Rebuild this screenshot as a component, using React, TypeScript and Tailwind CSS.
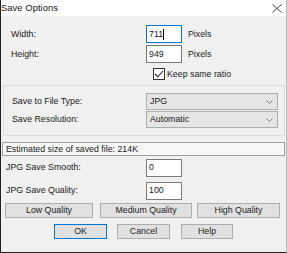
import React from 'react';

const Field: React.FC<{ value: string; focused?: boolean; caret?: boolean; className?: string }> = ({ value, focused, caret, className }) => (
  <div
    className={`flex items-center bg-white border pl-[2px] w-[36px] h-[18px] ${focused ? 'border-[#0078d7]' : 'border-[#7a7a7a]'} ${className ?? ''}`}
  >
    <span>{value}</span>
    {caret && <span className="inline-block w-px h-[11px] bg-black" />}
  </div>
);

const Select: React.FC<{ value: string }> = ({ value }) => (
  <div className="flex items-center justify-between w-[132px] h-[17px] bg-[#e5e5e5] border border-[#acacac] pl-[3px] pr-[4px]">
    <span>{value}</span>
    <svg width="7" height="4" viewBox="0 0 7 4" className="text-[#7a7a7a]">
      <path d="M0.5 0.5 L3.5 3.5 L6.5 0.5" fill="none" stroke="currentColor" strokeWidth="1" />
    </svg>
  </div>
);

const Button: React.FC<{ label: string; width: string; primary?: boolean; className?: string }> = ({ label, width, primary, className }) => (
  <div
    className={`flex items-center justify-center h-[15px] bg-[#e1e1e1] border ${primary ? 'border-[#0078d7]' : 'border-[#adadad]'} ${width} ${className ?? ''}`}
  >
    {label}
  </div>
);

export default function App() {
  return (
    <div className="w-[287px] h-[253px] flex flex-col bg-[#f0f0f0] border-l border-b border-l-[#222] border-b-[#222] border-r border-r-[#bdbdbd] font-['Liberation_Sans',sans-serif] text-[8.8px] text-[#1a1a1a] leading-none">
      {/* title bar */}
      <div className="h-[16px] bg-white flex items-center justify-between pr-[4px]">
        <span className="text-[9.5px]">Save Options</span>
        <svg width="10" height="9" viewBox="0 0 10 9" className="text-[#333]">
          <path d="M0.5 0.5 L9.5 8.5 M9.5 0.5 L0.5 8.5" fill="none" stroke="currentColor" strokeWidth="0.9" />
        </svg>
      </div>

      {/* size */}
      <div className="flex items-center h-[18px] mt-[9px] pl-[10px]">
        <span className="w-[135px]">Width:</span>
        <Field value="711" focused caret />
        <span className="ml-[6px]">Pixels</span>
      </div>
      <div className="flex items-center h-[18px] mt-[2px] pl-[10px]">
        <span className="w-[135px]">Height:</span>
        <Field value="949" />
        <span className="ml-[6px]">Pixels</span>
      </div>
      <div className="flex items-center h-[12px] mt-[5px] pl-[152px]">
        <div className="w-[12px] h-[12px] border border-[#333] bg-white flex items-center justify-center">
          <svg width="10" height="8" viewBox="0 0 10 8">
            <path d="M1 4 L3.8 6.8 L9 1" fill="none" stroke="#222" strokeWidth="1.1" />
          </svg>
        </div>
        <span className="ml-[2px]">Keep same ratio</span>
      </div>

      {/* file type group */}
      <div className="mt-[5px] ml-[2px] w-[282px] h-[51px] border border-[#dcdcdc] pt-[7px] flex flex-col gap-[1px]">
        <div className="flex items-center h-[17px] pl-[8px]">
          <span className="w-[134px]">Save to File Type:</span>
          <Select value="JPG" />
        </div>
        <div className="flex items-center h-[17px] pl-[8px]">
          <span className="w-[134px]">Save Resolution:</span>
          <Select value="Automatic" />
        </div>
      </div>

      {/* estimate */}
      <div className="mt-[6px] ml-[1px] w-[283px] h-[14px] border border-[#a0a0a0] bg-[#f7f7f7] flex items-center pl-[3px]">
        Estimated size of saved file: 214K
      </div>

      {/* jpg settings */}
      <div className="flex items-center h-[17px] mt-[3px] pl-[5px]">
        <span className="w-[140px]">JPG Save Smooth:</span>
        <Field value="0" className="h-[17px]" />
      </div>
      <div className="flex items-center h-[17px] mt-[6px] pl-[5px]">
        <span className="w-[140px]">JPG Save Quality:</span>
        <Field value="100" className="h-[17px]" />
      </div>

      <div className="flex items-center mt-[4px] pl-[4px]">
        <Button label="Low Quality" width="w-[88px]" />
        <Button label="Medium Quality" width="w-[92px]" className="ml-[7px]" />
        <Button label="High Quality" width="w-[83px]" className="ml-[5px]" />
      </div>

      <div className="flex items-center mt-[6px] pl-[53px]">
        <Button label="OK" width="w-[53px]" primary />
        <Button label="Cancel" width="w-[53px]" className="ml-[10px]" />
        <Button label="Help" width="w-[52px]" className="ml-[11px]" />
      </div>
    </div>
  );
}
